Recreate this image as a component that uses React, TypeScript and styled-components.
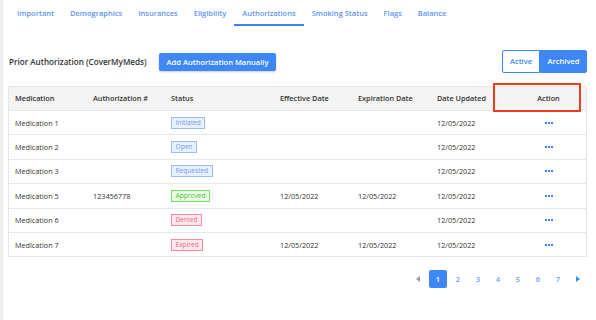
import React from 'react'
import styled, { createGlobalStyle } from 'styled-components'

const GlobalStyle = createGlobalStyle`
  html, body { margin: 0; padding: 0; background: #fff; }
  body { font-family: "Open Sans", "Liberation Sans", sans-serif; }
`

const Page = styled.div`
  width: 596px;
  height: 320px;
  box-sizing: border-box;
  border-left: 3px solid #eeeeee;
  padding: 0 9px 0 5px;
  overflow: hidden;
`

const Tabs = styled.div`
  display: flex;
  padding-left: 1px;
  height: 26px;
`

const Tab = styled.div<{ $active?: boolean }>`
  padding: 8px 8px 0;
  height: 26px;
  box-sizing: border-box;
  font-size: 7.5px;
  font-weight: 600;
  color: #5d95f7;
  border-bottom: 2px solid ${p => (p.$active ? '#3f82ef' : 'transparent')};
  white-space: nowrap;
`

const Toolbar = styled.div`
  display: flex;
  align-items: center;
  margin-top: 24px;
  height: 23px;
`

const Title = styled.div`
  font-size: 8.1px;
  font-weight: 600;
  color: #333;
  margin-left: 1px;
`

const PrimaryButton = styled.div`
  margin-left: 12px;
  background: #3d88f6;
  color: #fff;
  font-size: 7.55px;
  font-weight: 600;
  height: 18px;
  line-height: 18px;
  padding: 0 8px;
  border-radius: 2px;
  box-shadow: 0 1px 2px rgba(0, 0, 0, 0.2);
`

const Toggle = styled.div`
  margin-left: auto;
  display: flex;
  height: 23px;
`

const ToggleItem = styled.div<{ $on?: boolean; $w: number }>`
  box-sizing: border-box;
  width: ${p => p.$w}px;
  text-align: center;
  font-size: 7.5px;
  font-weight: 600;
  line-height: 21px;
  border: 1px solid #3d88f6;
  background: ${p => (p.$on ? '#3d88f6' : '#fff')};
  color: ${p => (p.$on ? '#fff' : '#3d88f6')};
  border-radius: ${p => (p.$on ? '0 2px 2px 0' : '2px 0 0 2px')};
`

const TableWrap = styled.div`
  position: relative;
  margin-top: 13px;
  border: 1px solid #e6e6e6;
`

const Grid = styled.div`
  display: grid;
  grid-template-columns: 78px 78px 109px 78px 79px 80px 1fr;
`

const HeadCell = styled.div<{ $center?: boolean }>`
  background: #f4f4f4;
  height: 23px;
  line-height: 23px;
  font-size: 7.3px;
  font-weight: 600;
  color: #333;
  padding-left: ${p => (p.$center ? '0' : '6px')};
  text-align: ${p => (p.$center ? 'center' : 'left')};
  border-bottom: 1px solid #e8e8e8;
  white-space: nowrap;
`

const Cell = styled.div<{ $center?: boolean; $last?: boolean }>`
  height: 23.4px;
  display: flex;
  align-items: center;
  justify-content: ${p => (p.$center ? 'center' : 'flex-start')};
  padding-left: ${p => (p.$center ? '0' : '6px')};
  font-size: 7.25px;
  color: #333;
  border-bottom: ${p => (p.$last ? 'none' : '1px solid #e8e8e8')};
  white-space: nowrap;
`

const badgeColors: Record<string, { bg: string; bd: string; fg: string }> = {
  blue: { bg: '#e8f0ff', bd: '#9dbcf7', fg: '#6e9ef2' },
  green: { bg: '#ebfbe6', bd: '#79de68', fg: '#4cbf3a' },
  red: { bg: '#fde9ed', bd: '#f58ba0', fg: '#ee6983' },
}

const Badge = styled.span<{ $tone: string }>`
  font-size: 6.6px;
  line-height: 10px;
  padding: 0 3.5px;
  border: 1px solid ${p => badgeColors[p.$tone].bd};
  background: ${p => badgeColors[p.$tone].bg};
  color: ${p => badgeColors[p.$tone].fg};
`

const Dots = styled.span`
  display: flex;
  gap: 1px;
  span {
    width: 2px;
    height: 2px;
    background: #3d88f6;
  }
`

const Highlight = styled.div`
  position: absolute;
  left: 484px;
  top: -4px;
  width: 84px;
  height: 25px;
  border: 2px solid #f03a1c;
`

const Pager = styled.div`
  display: flex;
  justify-content: flex-end;
  align-items: center;
  margin-top: 13px;
`

const PageItem = styled.div<{ $active?: boolean }>`
  width: 18px;
  height: 18px;
  margin-left: 2px;
  border-radius: 2px;
  display: flex;
  align-items: center;
  justify-content: center;
  font-size: 7.5px;
  font-weight: 600;
  background: ${p => (p.$active ? '#3d88f6' : 'transparent')};
  color: ${p => (p.$active ? '#fff' : '#6f9ff5')};
`

const Caret = ({ dir, color }: { dir: 'l' | 'r'; color: string }) => (
  <svg width="4" height="6" viewBox="0 0 4 6">
    <path d={dir === 'l' ? 'M4 0 L0 3 L4 6 Z' : 'M0 0 L4 3 L0 6 Z'} fill={color} />
  </svg>
)

const rows = [
  { med: 'Medication 1', auth: '', status: 'Initiated', tone: 'blue', eff: '', exp: '' },
  { med: 'Medication 2', auth: '', status: 'Open', tone: 'blue', eff: '', exp: '' },
  { med: 'Medication 3', auth: '', status: 'Requested', tone: 'blue', eff: '', exp: '' },
  { med: 'Medication 5', auth: '123456778', status: 'Approved', tone: 'green', eff: '12/05/2022', exp: '12/05/2022' },
  { med: 'Medication 6', auth: '', status: 'Denied', tone: 'red', eff: '', exp: '' },
  { med: 'Medication 7', auth: '', status: 'Expired', tone: 'red', eff: '12/05/2022', exp: '12/05/2022' },
]

const tabs = ['Important', 'Demographics', 'Insurances', 'Eligibility', 'Authorizations', 'Smoking Status', 'Flags', 'Balance']
const heads = ['Medication', 'Authorization #', 'Status', 'Effective Date', 'Expiration Date', 'Date Updated']

export default function App() {
  return (
    <>
      <GlobalStyle />
      <Page>
        <Tabs>
          {tabs.map(t => (
            <Tab key={t} $active={t === 'Authorizations'}>{t}</Tab>
          ))}
        </Tabs>
        <Toolbar>
          <Title>Prior Authorization (CoverMyMeds)</Title>
          <PrimaryButton>Add Authorization Manually</PrimaryButton>
          <Toggle>
            <ToggleItem $w={38}>Active</ToggleItem>
            <ToggleItem $w={47} $on>Archived</ToggleItem>
          </Toggle>
        </Toolbar>
        <TableWrap>
          <Grid>
            {heads.map(h => (
              <HeadCell key={h}>{h}</HeadCell>
            ))}
            <HeadCell $center>Action</HeadCell>
            {rows.map((r, i) => {
              const last = i === rows.length - 1
              return (
                <React.Fragment key={r.med}>
                  <Cell $last={last}>{r.med}</Cell>
                  <Cell $last={last}>{r.auth}</Cell>
                  <Cell $last={last}><Badge $tone={r.tone}>{r.status}</Badge></Cell>
                  <Cell $last={last}>{r.eff}</Cell>
                  <Cell $last={last}>{r.exp}</Cell>
                  <Cell $last={last}>12/05/2022</Cell>
                  <Cell $last={last} $center>
                    <Dots><span /><span /><span /></Dots>
                  </Cell>
                </React.Fragment>
              )
            })}
          </Grid>
          <Highlight />
        </TableWrap>
        <Pager>
          <PageItem><Caret dir="l" color="#9a9a9a" /></PageItem>
          {[1, 2, 3, 4, 5, 6, 7].map(n => (
            <PageItem key={n} $active={n === 1}>{n}</PageItem>
          ))}
          <PageItem><Caret dir="r" color="#3d88f6" /></PageItem>
        </Pager>
      </Page>
    </>
  )
}
